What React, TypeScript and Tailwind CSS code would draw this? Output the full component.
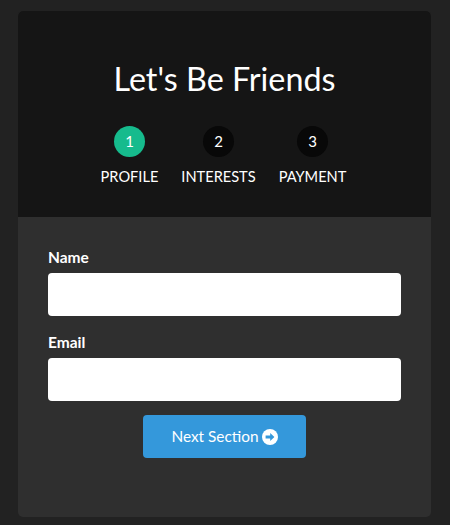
const steps = [
  { num: 1, label: "Profile", active: true },
  { num: 2, label: "Interests", active: false },
  { num: 3, label: "Payment", active: false },
]

export default function App() {
  return (
    <div className="min-h-[525px] bg-[#222222] pt-[11px] pl-[18px] font-['Lato',sans-serif] text-white">
      <div className="w-[413px] h-[506px] rounded-[5px] overflow-hidden bg-[#2f2f2f]">
        <div className="h-[206px] bg-[#151515] pt-[48px] flex flex-col items-center">
          <h1 className="text-[32.3px] leading-[40px] font-normal">Let's Be Friends</h1>
          <ul className="flex gap-[23px] mt-[27px] pr-[2px]">
            {steps.map((step) => (
              <li key={step.num} className="flex flex-col items-center">
                <span
                  className={
                    step.active
                      ? "w-[31px] h-[31px] rounded-full flex items-center justify-center text-[15px] bg-[#16bb8d]"
                      : "w-[31px] h-[31px] rounded-full flex items-center justify-center text-[15px] bg-[#080808]"
                  }
                >
                  {step.num}
                </span>
                <span className="mt-[10px] text-[14.6px] leading-[20px] uppercase">{step.label}</span>
              </li>
            ))}
          </ul>
        </div>

        <form className="px-[30px] pt-[31px]">
          <label className="block text-[15.5px] leading-[18px] font-bold">Name</label>
          <input type="text" className="block w-full h-[43px] mt-[7px] rounded-[4px] bg-white" />
          <label className="block mt-[17px] text-[15.5px] leading-[18px] font-bold">Email</label>
          <input type="email" className="block w-full h-[43px] mt-[7px] rounded-[4px] bg-white" />
          <div className="flex justify-center mt-[14px]">
            <button
              type="button"
              className="w-[163px] h-[43px] rounded-[4px] bg-[#3498db] text-[15.4px] text-white flex items-center justify-center gap-[3px]"
            >
              Next Section
              <svg width="16" height="16" viewBox="0 0 16 16">
                <circle cx="8" cy="8" r="8" fill="#ffffff" />
                <path d="M3.6 6.5H8.2V4.1L12.4 8L8.2 11.9V9.5H3.6Z" fill="#3498db" />
              </svg>
            </button>
          </div>
        </form>
      </div>
    </div>
  )
}
